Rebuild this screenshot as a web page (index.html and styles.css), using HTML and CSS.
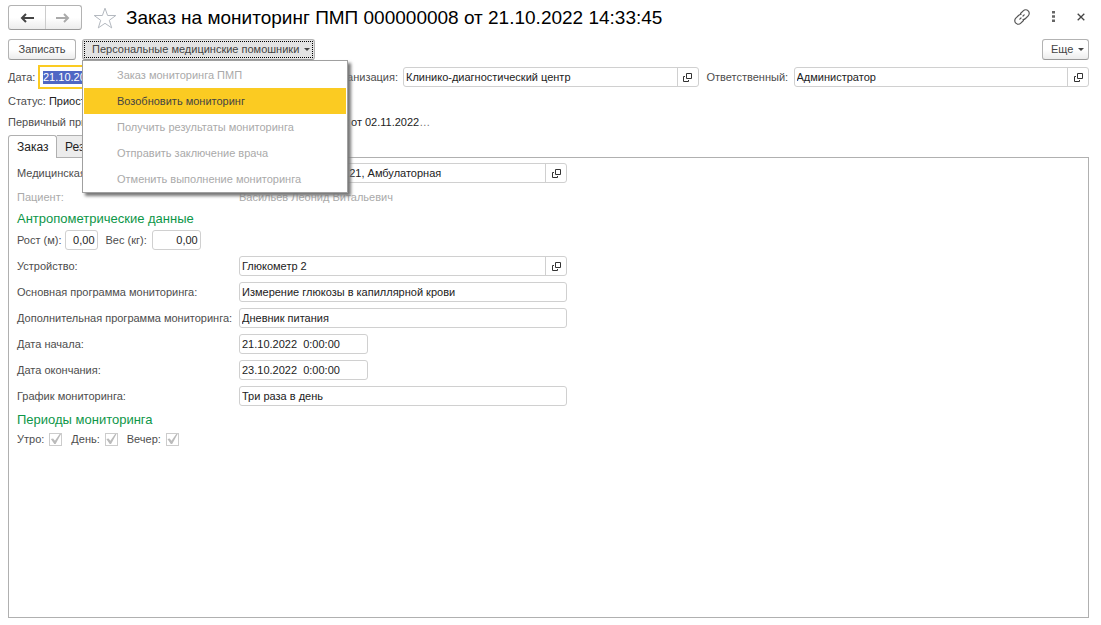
FILE: index.html
```
<!DOCTYPE html>
<html lang="ru">
<head>
<meta charset="utf-8">
<title>Заказ на мониторинг ПМП</title>
<link rel="stylesheet" href="styles.css">
</head>
<body>
<svg class="defs" aria-hidden="true">
  <symbol id="open" viewBox="0 0 9 9"><path d="M3.500 0.500h5v5h-5zM2 3.500H0.500v5h5V7" fill="none" stroke="#333" stroke-width="1"/></symbol>
</svg>
<main class="window">
  <header class="titlebar">
    <div class="nav">
      <button class="nav-btn" type="button" aria-label="Назад"><svg width="14" height="10" viewBox="0 0 14 10"><path d="M14 5H2M6 1L2 5l4 4" fill="none" stroke="#444" stroke-width="2"/></svg></button>
      <button class="nav-btn" type="button" aria-label="Вперед" disabled><svg width="14" height="10" viewBox="0 0 14 10"><path d="M0 5h12M8 1l4 4-4 4" fill="none" stroke="#aaa" stroke-width="2"/></svg></button>
    </div>
    <button class="icon-btn star" type="button" aria-label="Избранное"><svg width="24" height="22" viewBox="0 0 24 22"><path d="M12 1.200l2.600 7.300h8.200l-6.500 4.800 2.400 7.600-6.700-4.600-6.700 4.600 2.400-7.600L1.200 8.500h8.200z" fill="none" stroke="#b4b9c0" stroke-width="1"/></svg></button>
    <h1 class="title">Заказ на мониторинг ПМП 000000008 от 21.10.2022 14:33:45</h1>
    <div class="actions">
      <button class="icon-btn" type="button" aria-label="Ссылка"><svg width="16" height="16" viewBox="0 0 16 16"><g fill="none" stroke="#555" stroke-width="1.200" stroke-linecap="round"><path d="M6.500 4.500l2.700-2.700a3.300 3.300 0 0 1 5 5l-2.700 2.700a3.300 3.300 0 0 1-2.500 1"/><path d="M9.500 11.500l-2.700 2.700a3.300 3.300 0 0 1-5-5l2.700-2.700a3.300 3.300 0 0 1 2.500-1"/><path d="M5.800 10.200l1.200-1.200M9 7l1.200-1.200"/></g></svg></button>
      <button class="icon-btn" type="button" aria-label="Меню"><svg width="3" height="11" viewBox="0 0 3 11"><path d="M0 0h3v2.500H0zM0 4.200h3v2.500H0zM0 8.400h3v2.500H0z" fill="#666"/></svg></button>
      <button class="icon-btn" type="button" aria-label="Закрыть"><svg width="8" height="8" viewBox="0 0 8 8"><path d="M.7.7l6.600 6.600M7.300.7L.7 7.300" stroke="#444" stroke-width="1.300"/></svg></button>
    </div>
  </header>

  <div class="toolbar">
    <button class="btn btn-save" type="button">Записать</button>
    <div class="dropdown">
      <button class="btn btn-open" type="button" aria-expanded="true">Персональные медицинские помошники<span class="caret"></span></button>
      <div class="menu" role="menu">
        <button class="menu-item" role="menuitem" type="button" disabled>Заказ мониторинга ПМП</button>
        <button class="menu-item menu-item-active" role="menuitem" type="button">Возобновить мониторинг</button>
        <button class="menu-item" role="menuitem" type="button" disabled>Получить результаты мониторинга</button>
        <button class="menu-item" role="menuitem" type="button" disabled>Отправить заключение врача</button>
        <button class="menu-item" role="menuitem" type="button" disabled>Отменить выполнение мониторинга</button>
      </div>
    </div>
    <button class="btn btn-more" type="button">Еще<span class="caret"></span></button>
  </div>

  <div class="head-fields">
    <label class="label-date" for="date">Дата:</label>
    <div class="focus"><input class="text selected" id="date" value="21.10.2022 14:33:45"></div>
    <label class="label-org" for="org">Организация:</label>
    <div class="field grow"><input class="text" id="org" value="Клинико-диагностический центр"><button class="open" type="button" aria-label="Открыть"><svg width="9" height="9"><use href="#open"/></svg></button></div>
    <label class="label-resp" for="resp">Ответственный:</label>
    <div class="field grow"><input class="text" id="resp" value="Администратор"><button class="open" type="button" aria-label="Открыть"><svg width="9" height="9"><use href="#open"/></svg></button></div>
  </div>
  <p class="line status">Статус: <span class="value">Приостановлен</span></p>
  <div class="line visit"><span class="visit-name">Первичный прием: <a class="visit-doc" href="#">Прием 2</a></span><span class="value">от 02.11.2022<a class="visit-link" href="#">…</a></span></div>

  <div class="tabs" role="tablist">
    <button class="tab tab-active" role="tab" type="button" aria-selected="true">Заказ</button>
    <button class="tab" role="tab" type="button">Результаты</button>
  </div>
  <section class="panel">
    <div class="form">
      <label for="card">Медицинская карта:</label>
      <div class="field"><input class="text" id="card" value="Карта № 12 от 21.04.21, Амбулаторная"><button class="open" type="button" aria-label="Открыть"><svg width="9" height="9"><use href="#open"/></svg></button></div>
      <span class="muted">Пациент:</span>
      <span class="muted">Васильев Леонид Витальевич</span>
    </div>
    <h2 class="group">Антропометрические данные</h2>
    <div class="measures">
      <label for="height">Рост (м):</label>
      <div class="field field-height"><input class="text num" id="height" value="0,00"></div>
      <label for="weight">Вес (кг):</label>
      <div class="field field-weight"><input class="text num" id="weight" value="0,00"></div>
    </div>
    <div class="form">
      <label for="device">Устройство:</label>
      <div class="field"><input class="text" id="device" value="Глюкометр 2"><button class="open" type="button" aria-label="Открыть"><svg width="9" height="9"><use href="#open"/></svg></button></div>
      <label for="main">Основная программа мониторинга:</label>
      <div class="field"><input class="text" id="main" value="Измерение глюкозы в капиллярной крови"></div>
      <label for="extra">Дополнительная программа мониторинга:</label>
      <div class="field"><input class="text" id="extra" value="Дневник питания"></div>
      <label for="start">Дата начала:</label>
      <div class="field field-date"><input class="text" id="start" value="21.10.2022  0:00:00"></div>
      <label for="end">Дата окончания:</label>
      <div class="field field-date"><input class="text" id="end" value="23.10.2022  0:00:00"></div>
      <label for="plan">График мониторинга:</label>
      <div class="field"><input class="text" id="plan" value="Три раза в день"></div>
    </div>
    <h2 class="group">Периоды мониторинга</h2>
    <div class="periods">
      <label class="check">Утро: <input type="checkbox" checked disabled></label>
      <label class="check">День: <input type="checkbox" checked disabled></label>
      <label class="check">Вечер: <input type="checkbox" checked disabled></label>
    </div>
  </section>
</main>
</body>
</html>
```
FILE: styles.css
```
* { box-sizing: border-box; }
body {
  margin: 0;
  background: #fff;
  color: #4d4d4d;
  font: 11px/16px "Liberation Sans", Arial, sans-serif;
}
button, input { font: inherit; color: inherit; margin: 0; }
button { padding: 0; }
.defs { display: none; }
.window {
  display: flex;
  flex-direction: column;
  min-height: 100vh;
  padding: 5px 12px 7px 8px;
}

.titlebar { display: flex; align-items: center; height: 25px; }
.nav {
  display: flex;
  width: 74px;
  height: 25px;
  border: 1px solid #b3b3b3;
  border-bottom-color: #999;
  border-radius: 3px;
  background: linear-gradient(#fff 50%, #ececec);
}
.nav-btn {
  display: flex;
  flex: 1;
  align-items: center;
  justify-content: center;
  border: 0;
  background: none;
}
.nav-btn + .nav-btn { border-left: 1px solid #ccc; }
.icon-btn { display: flex; border: 0; background: none; }
.star { margin: 0 9px 0 11px; }
.title {
  margin: 0;
  color: #000;
  font-size: 19px;
  font-weight: 400;
  line-height: 24px;
  white-space: nowrap;
}
.actions { display: flex; align-items: center; gap: 22px; height: 23px; margin: 0 4px auto auto; }

.toolbar { display: flex; gap: 6px; margin-top: 9px; }
.btn {
  height: 21px;
  padding: 0 9px;
  border: 1px solid #b3b3b3;
  border-bottom-color: #999;
  border-radius: 3px;
  background: linear-gradient(#fff 50%, #ececec);
  color: #444;
  line-height: 19px;
  white-space: nowrap;
}
.btn-save { width: 68px; }
.btn-open {
  width: 233px;
  background: #e3e3e3;
  text-align: left;
  outline: 1px dotted #000;
  outline-offset: -3px;
}
.btn-more { width: 47px; margin-left: auto; padding: 0 4px 0 8px; }
.caret {
  display: inline-block;
  margin-left: 5px;
  border: 3px solid transparent;
  border-top-color: #444;
  border-bottom: 0;
  vertical-align: 2px;
}
.dropdown { position: relative; }
.menu {
  position: absolute;
  z-index: 2;
  top: 100%;
  left: 0;
  width: 266px;
  padding: 1px 1px 0;
  border: 1px solid #a0a0a0;
  background: #fff;
  box-shadow: 3px 3px 3px #777;
}
.menu-item {
  display: block;
  width: 100%;
  height: 26px;
  padding: 0 33px;
  border: 0;
  background: none;
  color: #aaa;
  text-align: left;
  white-space: nowrap;
}
.menu-item-active { background: #fbcb22; color: #444; }

.field {
  display: flex;
  height: 20px;
  border: 1px solid #d0d0d0;
  border-radius: 3px;
  background: #fff;
}
.text {
  flex: 1;
  width: 100%;
  min-width: 0;
  padding: 0 2px;
  border: 0;
  outline: 0;
  background: none;
  color: #222;
}
.num { text-align: right; }
.open {
  display: flex;
  flex: none;
  align-items: center;
  justify-content: center;
  width: 21px;
  border: 0;
  border-left: 1px solid #d0d0d0;
  background: none;
}
.head-fields { display: flex; align-items: center; height: 24px; margin-top: 5px; }
.grow { flex: 1; }
.label-date { width: 30px; }
.focus {
  display: flex;
  align-items: center;
  width: 136px;
  height: 24px;
  padding: 0 3px;
  border: 2px solid #fbcb22;
}
.selected { height: 13px; padding: 0; background: #4f67c4; color: #fff; }
.label-org { width: 229px; padding-right: 5px; text-align: right; }
.label-resp { width: 95px; padding-left: 8px; }
.line { margin: 0; }
.value { color: #222; }
.status { margin-top: 4px; }
.visit { display: flex; margin-top: 5px; }
.visit-name { display: flex; justify-content: space-between; width: 343px; padding-right: 2px; }
.visit-doc { color: #2a6db0; text-decoration: none; }
.visit-link { color: #777; text-decoration: none; }

.tabs { display: flex; height: 23px; margin-top: 5px; }
.tab {
  padding: 0 8px;
  border: 1px solid #b0b0b0;
  border-left: 0;
  background: #ececec;
  color: #222;
  font-size: 12px;
}
.tab-active {
  z-index: 1;
  width: 49px;
  border-left: 1px solid #b0b0b0;
  border-bottom: 0;
  border-radius: 3px 3px 0 0;
  background: #fff;
}
.panel {
  flex: 1;
  margin-top: -1px;
  padding: 5px 8px;
  border: 1px solid #b0b0b0;
}
.form {
  display: grid;
  grid-template-columns: 222px 328px;
  align-items: center;
  row-gap: 6px;
  white-space: nowrap;
}
.muted { color: #aaa; }
.field-date { width: 129px; }
.group {
  margin: 6px 0 4px;
  color: #0d9648;
  font-size: 13px;
  font-weight: 400;
  line-height: 15px;
}
.measures { display: flex; align-items: center; margin-bottom: 6px; }
.field-height { width: 33px; margin: 0 8px 0 3px; }
.field-weight { width: 49px; margin-left: 5px; }
.periods { display: flex; gap: 9px; }
.check { display: flex; align-items: center; gap: 5px; }
.check input {
  width: 13px;
  height: 13px;
  border: 1px solid #ccc;
  background: #fff;
  appearance: none;
}
.check input::after {
  content: "";
  display: block;
  width: 11px;
  height: 11px;
  background: #bbb;
  clip-path: polygon(5% 50%, 25% 45%, 42% 65%, 88% 0, 100% 0, 48% 96%, 36% 96%);
}
```
